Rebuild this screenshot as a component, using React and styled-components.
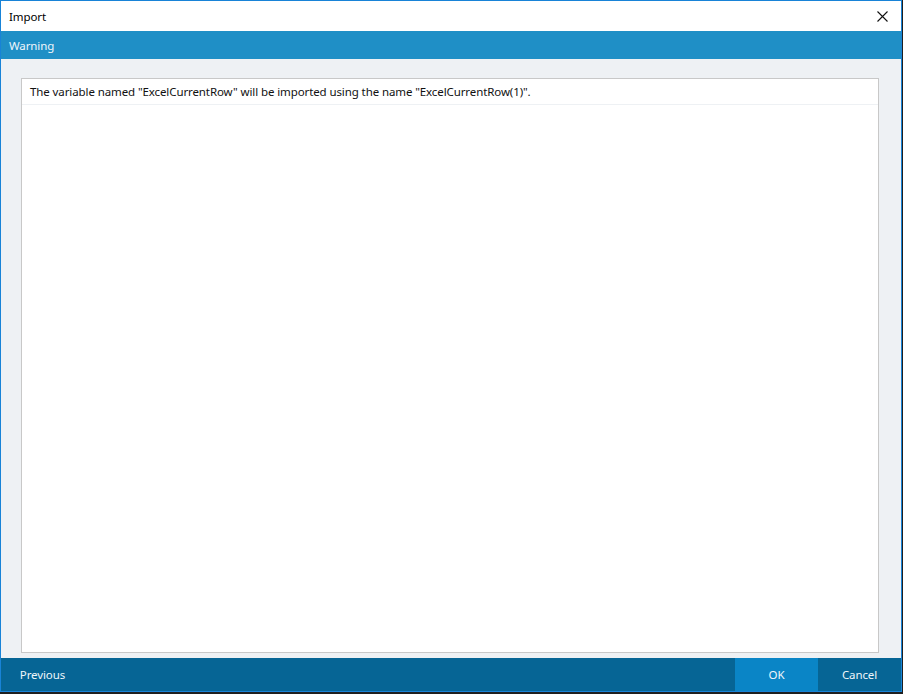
import styled, { createGlobalStyle } from "styled-components";

const GlobalStyle = createGlobalStyle`
    html, body {
        margin: 0;
        padding: 0;
        background: #1f1f1f;
    }
    body {
        font-family: "Segoe UI", "Noto Sans", "Liberation Sans", sans-serif;
        font-size: 11.5px;
        letter-spacing: -0.1px;
    }
`;

function CloseIcon() {
    return (
        <svg width="11" height="11" viewBox="0 0 11 11">
            <path d="M0.5 0.5 L10.5 10.5 M10.5 0.5 L0.5 10.5" stroke="#111" strokeWidth="1.1" />
        </svg>
    );
}

export default function App() {
    return (
        <>
            <GlobalStyle />
            <Window>
                <TitleBar>
                    <Title>Import</Title>
                    <CloseButton aria-label="Close"><CloseIcon /></CloseButton>
                </TitleBar>
                <SectionBar>Warning</SectionBar>
                <Content>
                    <MessageList>
                        <MessageRow>
                            The variable named "ExcelCurrentRow" will be imported using the name "ExcelCurrentRow(1)".
                        </MessageRow>
                    </MessageList>
                </Content>
                <Footer>
                    <FooterButton>Previous</FooterButton>
                    <Spacer />
                    <FooterButton primary>OK</FooterButton>
                    <FooterButton>Cancel</FooterButton>
                </Footer>
            </Window>
        </>
    );
}

const Window = styled.div`
    width: 900px;
    height: 690px;
    border: 1px solid #1883d7;
    display: flex;
    flex-direction: column;
    background: #eef1f4;
`;

const TitleBar = styled.div`
    height: 30px;
    background: #fff;
    display: flex;
    align-items: center;
    justify-content: space-between;
    padding-left: 8px;
`;

const Title = styled.span`
    color: #000;
`;

const CloseButton = styled.div`
    width: 30px;
    height: 30px;
    margin-right: 4px;
    display: flex;
    align-items: center;
    justify-content: center;
`;

const SectionBar = styled.div`
    height: 28px;
    background: #1f8fc6;
    color: #eef6fb;
    display: flex;
    align-items: center;
    padding-left: 8px;
`;

const Content = styled.div`
    flex: 1;
    padding: 19px 22px 5px 20px;
    display: flex;
`;

const MessageList = styled.div`
    flex: 1;
    background: #fff;
    border: 1px solid #c8c8c8;
`;

const MessageRow = styled.div`
    height: 25px;
    border-bottom: 1px solid #eef1f4;
    display: flex;
    align-items: center;
    padding-left: 8px;
    color: #111;
`;

const Footer = styled.div`
    height: 33px;
    background: #066595;
    display: flex;
`;

const Spacer = styled.div`
    flex: 1;
`;

const FooterButton = styled.div`
    width: 83px;
    display: flex;
    align-items: center;
    justify-content: center;
    color: #eef6fb;
    background: ${props => props.primary ? '#0a85c6' : 'transparent'};
`;
